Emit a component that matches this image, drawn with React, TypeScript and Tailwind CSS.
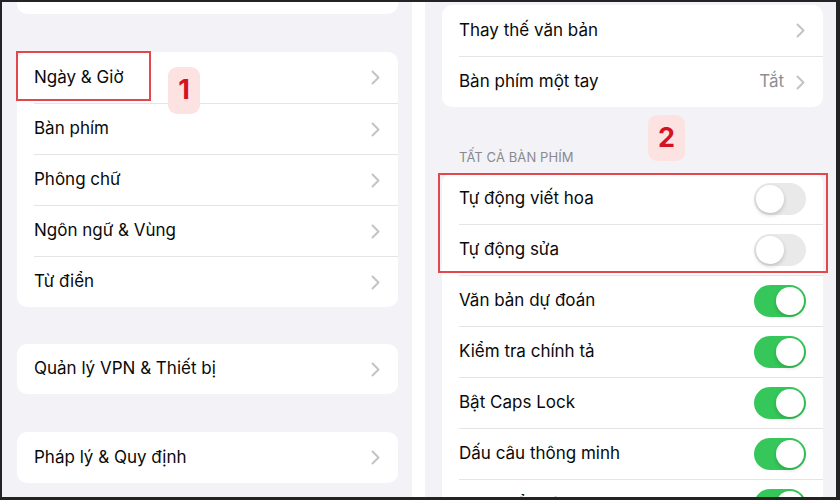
import React from "react";

const font = { fontFamily: "Inter, 'Noto Sans', sans-serif" };

const Chevron = () => (
  <svg width="9" height="15" viewBox="0 0 9 15" fill="none">
    <path d="M1.5 1.5L7.5 7.5L1.5 13.5" stroke="#c4c4c8" strokeWidth="2" strokeLinecap="round" strokeLinejoin="round" />
  </svg>
);

const Toggle = ({ on }: { on: boolean }) => (
  <div
    className={`relative w-[52px] h-[32px] rounded-full shrink-0 ${on ? "bg-[#35c759]" : "bg-[#e9e9ea]"}`}
  >
    <div
      className={`absolute top-[2px] w-[28px] h-[28px] rounded-full bg-white shadow-[0_2px_4px_rgba(0,0,0,0.18)] ${on ? "right-[2px]" : "left-[2px]"}`}
    />
  </div>
);

type Row = { label: string; value?: string; toggle?: boolean };

const Card = ({ rows, h = "h-[51px]", chevronPr = "pr-[18px]" }: { rows: Row[]; h?: string; chevronPr?: string }) => (
  <div className="bg-white rounded-[10px] overflow-hidden">
    {rows.map((r, i) => (
      <div key={i} className="pl-[17px]">
        <div
          className={`${h} flex items-center justify-between ${r.toggle === undefined ? chevronPr : "pr-[17px]"} ${i > 0 ? "border-t border-[#e4e4e7]" : ""}`}
        >
          <span className="text-[17px] text-[#0a0a0a]">{r.label}</span>
          {r.toggle === undefined ? (
            <div className="flex items-center gap-[12px]">
              {r.value && <span className="text-[17px] text-[#8e8e93]">{r.value}</span>}
              <Chevron />
            </div>
          ) : (
            <Toggle on={r.toggle} />
          )}
        </div>
      </div>
    ))}
  </div>
);

const Badge = ({ n, cls }: { n: string; cls: string }) => (
  <div
    className={`absolute ${cls} rounded-[9px] bg-[#fde2e2] flex items-center justify-center text-[27px] font-bold text-[#d3141f]`}
  >
    {n}
  </div>
);

export default function App() {
  return (
    <div style={font} className="relative w-[840px] h-[500px] bg-[#232323] pt-[2px] pl-[2px] pr-[4px] pb-[3px] flex overflow-hidden">
      {/* Left screen */}
      <div className="w-[410px] h-full bg-[#f2f2f7] pl-[15px] pr-[14px] flex flex-col overflow-hidden">
        <div className="h-[12px] bg-white rounded-b-[10px] shrink-0" />
        <div className="mt-[38px]">
          <Card
            rows={[
              { label: "Ngày & Giờ" },
              { label: "Bàn phím" },
              { label: "Phông chữ" },
              { label: "Ngôn ngữ & Vùng" },
              { label: "Từ điển" },
            ]}
          />
        </div>
        <div className="mt-[37px]">
          <Card rows={[{ label: "Quản lý VPN & Thiết bị" }]} h="h-[50px]" />
        </div>
        <div className="mt-[38px]">
          <Card rows={[{ label: "Pháp lý & Quy định" }]} h="h-[51px]" />
        </div>
      </div>

      {/* Gap */}
      <div className="w-[13px] h-full bg-white" />

      {/* Right screen */}
      <div className="flex-1 h-full bg-[#f2f2f7] pl-[17px] pr-[13px] flex flex-col overflow-hidden">
        <div className="mt-[3px]">
          <Card
            rows={[{ label: "Thay thế văn bản" }, { label: "Bàn phím một tay", value: "Tắt" }]}
            chevronPr="pr-[18px]"
          />
        </div>
        <div className="h-[66px] flex items-end pb-[8px] pl-[17px] shrink-0">
          <span className="text-[13px] leading-[16px] text-[#8a8a8e] tracking-[0.1px]">TẤT CẢ BÀN PHÍM</span>
        </div>
        <div className="shrink-0">
          <Card
            rows={[
              { label: "Tự động viết hoa", toggle: false },
              { label: "Tự động sửa", toggle: false },
              { label: "Văn bản dự đoán", toggle: true },
              { label: "Kiểm tra chính tả", toggle: true },
              { label: "Bật Caps Lock", toggle: true },
              { label: "Dấu câu thông minh", toggle: true },
              { label: "Trượt để nhập", toggle: true },
            ]}
          />
        </div>
      </div>

      {/* Annotations */}
      <div className="absolute left-[16px] top-[51px] w-[135px] h-[50px] border-2 border-[#e0484c]" />
      <Badge n="1" cls="left-[168px] top-[67px] w-[32px] h-[47px]" />
      <div className="absolute left-[438px] top-[173px] w-[390px] h-[100px] border-2 border-[#e0484c]" />
      <Badge n="2" cls="left-[648px] top-[115px] w-[37px] h-[46px]" />

      {/* bottom frame line */}
      <div className="absolute left-0 bottom-0 w-full h-[3px] bg-[#232323]" />
    </div>
  );
}
